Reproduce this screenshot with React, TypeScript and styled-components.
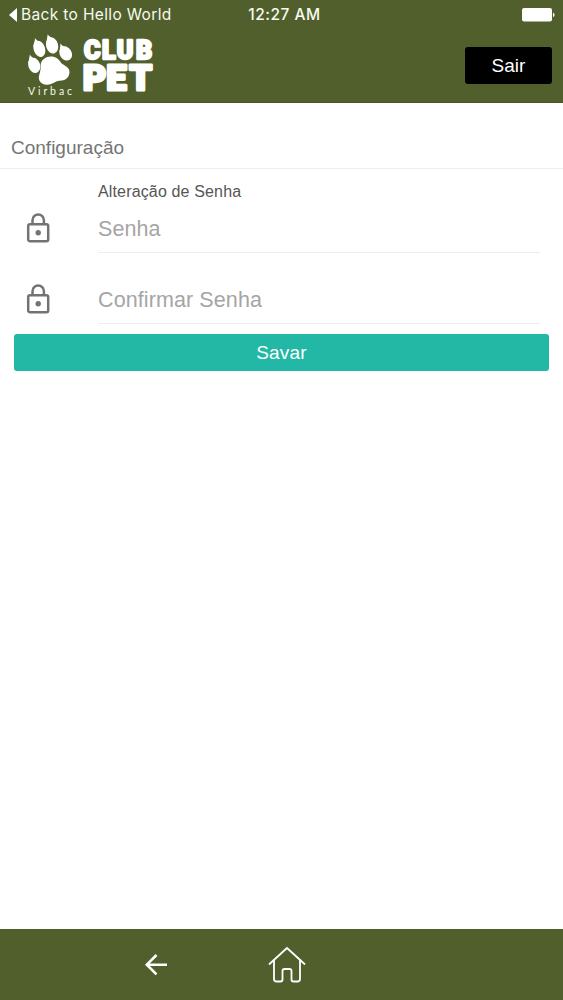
import React from "react";
import styled, { createGlobalStyle } from "styled-components";

const green = "#505f2c";
const sans = '"Liberation Sans", Arial, sans-serif';
const system = 'Inter, "Liberation Sans", sans-serif';

const GlobalStyle = createGlobalStyle`
  * { box-sizing: border-box; }
  body { margin: 0; background: #fff; font-family: ${sans}; }
`;

const Screen = styled.div`
  display: flex;
  flex-direction: column;
  height: 100vh;
  background: #fff;
`;

const Header = styled.header`
  height: 103px;
  background: ${green};
  border-bottom: 1px solid #4a5528;
`;

const StatusBar = styled.div`
  display: grid;
  grid-template-columns: 1fr auto 1fr;
  align-items: center;
  height: 28px;
  padding: 0 8px 0 9px;
  color: #f7faee;
  font-family: ${system};
  line-height: 28px;
`;

const BackLink = styled.div`
  display: flex;
  align-items: center;
  gap: 4px;
  height: 26px;
  white-space: nowrap;
`;

const BackLabel = styled.span`
  font-size: 15.5px;
  letter-spacing: 0.35px;
`;

const Clock = styled.span`
  font-weight: 500;
  font-size: 15.5px;
  letter-spacing: 0.5px;
  padding: 1px 0 0 5px;
`;

const Battery = styled.svg`
  display: block;
  justify-self: end;
`;

const NavBar = styled.div`
  display: flex;
  align-items: flex-start;
  justify-content: space-between;
  padding: 2px 11px 0 20px;
`;

const Button = styled.button<{ $tone: "dark" | "teal" }>`
  display: block;
  height: 37px;
  padding: 0;
  border: 0;
  border-radius: 3px;
  color: #fff;
  font: 19px/37px ${sans};
  background: ${(p) => (p.$tone === "dark" ? "#000" : "#23b8a6")};
`;

const ExitButton = styled(Button)`
  width: 87px;
  margin-top: 17px;
`;

const SaveButton = styled(Button)`
  margin: 10px 14px 0;
  letter-spacing: 0.2px;
`;

const Title = styled.h1`
  margin: 0;
  height: 66px;
  padding: 34px 11px 0;
  border-bottom: 1px solid #eee;
  color: #757575;
  font-size: 19px;
  font-weight: 400;
  line-height: 22px;
`;

const Form = styled.form`
  display: flex;
  flex-direction: column;
  flex: 1;
`;

const FormLabel = styled.p`
  margin: 13px 0 0 98px;
  height: 20px;
  color: #555;
  font-size: 16px;
  line-height: 20px;
  letter-spacing: 0.15px;
`;

const Field = styled.label<{ $spaced?: boolean }>`
  display: grid;
  grid-template-columns: 98px 1fr;
  margin-right: 23px;
  padding-top: ${(p) => (p.$spaced ? "20px" : "0")};
`;

const LockIcon = styled.svg`
  margin: 11px 0 0 26px;
`;

const Input = styled.input`
  width: 100%;
  height: 51px;
  padding: 5px 0 0;
  border: 0;
  border-bottom: 1px solid #eee;
  background: transparent;
  font: 21.5px ${sans};
  letter-spacing: 0.1px;
  outline: 0;
  &::placeholder { color: #a5a5a5; opacity: 1; }
`;

const Footer = styled.footer`
  display: flex;
  align-items: center;
  gap: 100px;
  height: 71px;
  padding-left: 144px;
  background: ${green};
`;

const LogoText = styled.text`
  fill: #fff;
  stroke: #fff;
  stroke-linejoin: round;
  font-family: Roboto, sans-serif;
  font-weight: 900;
`;

const BrandText = styled.text`
  fill: #f4f8e9;
  font-family: Lato, sans-serif;
  font-size: 10.5px;
`;

function Logo() {
  return (
    <svg width="140" height="70" viewBox="20 30 140 70">
      <g fill="#fff">
        <ellipse cx="39.3" cy="48.800" rx="5.7" ry="8.4" transform="rotate(-20 39.3 48.8)" />
        <path d="M35.100 38.300L33.500 47L41 42.600Q36.500 41 35.100 38.300Z" />
        <ellipse cx="52.1" cy="45.500" rx="6" ry="8.2" transform="rotate(-15 52.1 45.5)" />
        <path d="M47.700 34.300L46.300 43L54 38.300Q49.500 37.500 47.700 34.300Z" />
        <ellipse cx="65.7" cy="53.500" rx="5.900" ry="7.500" transform="rotate(-32 65.7 53.5)" />
        <path d="M60.500 43.500L59.500 52L67.500 47Q62 46.500 60.500 43.500Z" />
        <ellipse cx="34.2" cy="65.300" rx="5.900" ry="7.800" transform="rotate(-20 34.2 65.3)" />
        <path d="M29.900 54.600L28.300 63.500L36 58.800Q31.300 58 29.900 54.600Z" />
        <path d="M40.600 65C41.4 59.3 46 56.4 50.8 56.4C55.8 56.4 59 59 60.800 62.500C62.600 65 69.500 66.500 69.500 72C69.5 77.6 65.2 80.6 59.5 80.8C54.4 81.2 52.6 85 46.5 84.800C41.2 84.4 38 80.6 39 76C40 72 41 69.4 40.600 65Z" />
      </g>
      <BrandText x="28" y="95" textLength="44">Virbac</BrandText>
      <LogoText x="84 102 116.800 136" y="58.8" fontSize="25" strokeWidth="2.3">CLUB</LogoText>
      <LogoText x="83 106.5 129.4" y="89.500" fontSize="35.500" strokeWidth="3.2">PET</LogoText>
    </svg>
  );
}

function Lock() {
  return (
    <LockIcon width="24" height="31" viewBox="0 0 24 31" fill="none" stroke="#737373" strokeWidth="2.5">
      <rect x="2.2" y="11.2" width="20" height="17" rx="1.8" />
      <path d="M6.5 11V7.2a5.7 5.7 0 0 1 11.4 0V11" />
      <circle cx="12.2" cy="19.7" r="2.7" fill="#737373" stroke="none" />
    </LockIcon>
  );
}

export default function App() {
  return (
    <Screen>
      <GlobalStyle />
      <Header>
        <StatusBar>
          <BackLink>
            <svg width="8" height="14" viewBox="0 0 8 14"><path d="M8 0V14L0 7Z" fill="#fff" /></svg>
            <BackLabel>Back to Hello World</BackLabel>
          </BackLink>
          <Clock>12:27 AM</Clock>
          <Battery width="33" height="14" viewBox="0 0 33 14" fill="#fff">
            <rect width="30" height="13.5" rx="2" />
            <path d="M31 4.7c2 .5 2 3.8 0 4.3Z" />
          </Battery>
        </StatusBar>
        <NavBar>
          <Logo />
          <ExitButton $tone="dark" type="button">Sair</ExitButton>
        </NavBar>
      </Header>
      <Title>Configuração</Title>
      <Form>
        <FormLabel>Alteração de Senha</FormLabel>
        <Field>
          <Lock />
          <Input type="password" placeholder="Senha" />
        </Field>
        <Field $spaced>
          <Lock />
          <Input type="password" placeholder="Confirmar Senha" />
        </Field>
        <SaveButton $tone="teal" type="button">Savar</SaveButton>
      </Form>
      <Footer>
        <svg width="24" height="24" viewBox="0 0 24 24" fill="none" stroke="#fff" strokeWidth="2.6">
          <path d="M23 11.7H3.5M12.5 2L2.8 11.7L12.5 21.4" />
        </svg>
        <svg width="38" height="38" viewBox="0 0 38 38" fill="none" stroke="#fff" strokeWidth="1.8" strokeLinecap="round" strokeLinejoin="round">
          <path d="M1.5 18L19 2L36.5 18" />
          <path d="M6 14V33Q6 35.5 8.5 35.5H12.5Q14.5 35.5 14.5 33.5V25Q14.5 23 16.5 23H21.5Q23.5 23 23.5 25V33.5Q23.5 35.5 25.5 35.5H29.5Q32 35.5 32 33V14" />
        </svg>
      </Footer>
    </Screen>
  );
}
